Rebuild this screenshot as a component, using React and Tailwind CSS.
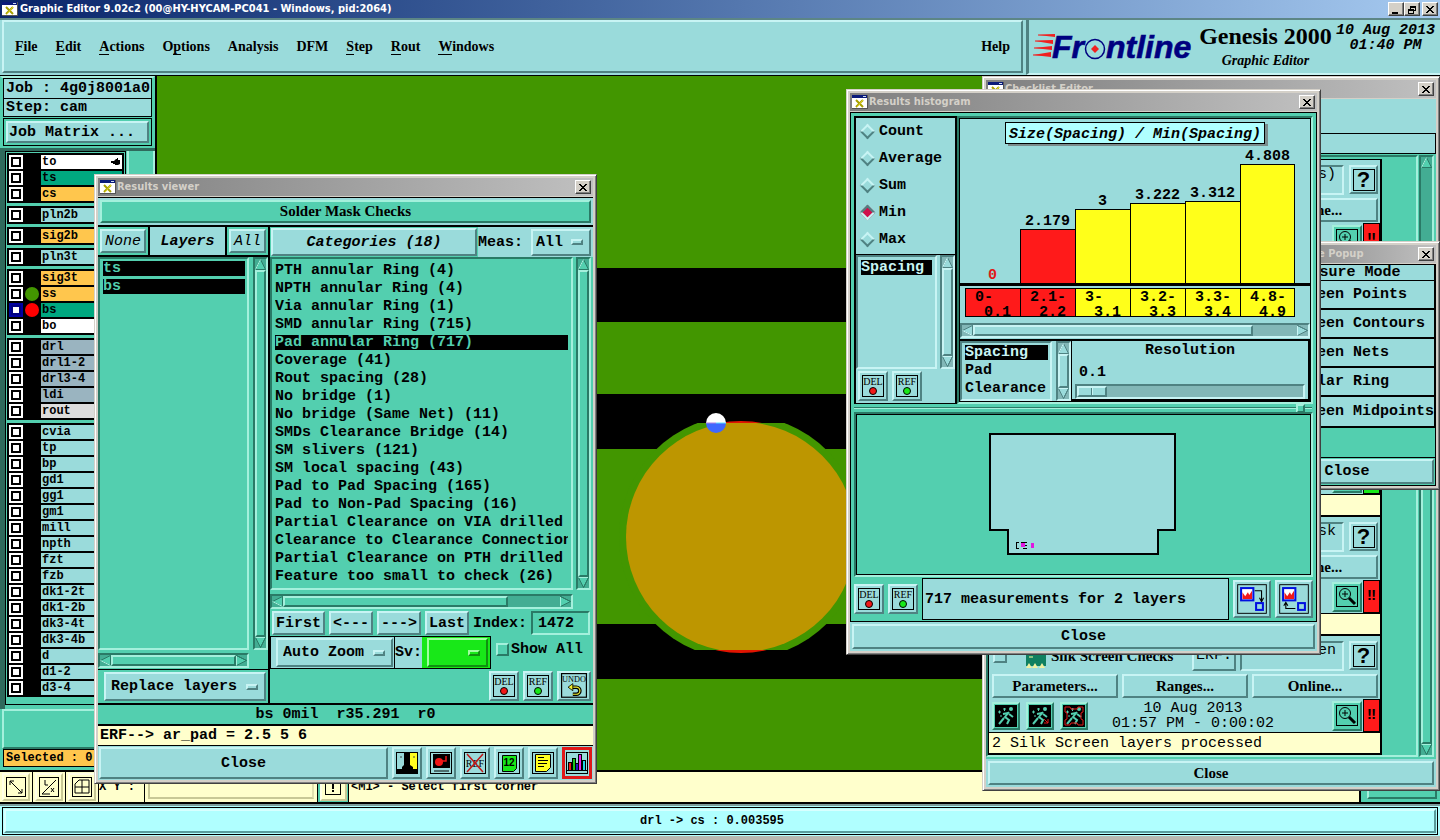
import React from "react";

const MONO = "font-['Liberation_Mono',monospace]";
const SERIF = "font-['Liberation_Serif',serif]";
const SANS = "font-['DejaVu_Sans_Condensed','DejaVu_Sans',sans-serif]";

const RAISED = "border-2 border-t-[#c8f4f4] border-l-[#c8f4f4] border-b-[#4f8282] border-r-[#4f8282]";
const SUNKEN = "border-2 border-t-[#4f8282] border-l-[#4f8282] border-b-[#c8f4f4] border-r-[#c8f4f4]";
const T_RAISED = "border-2 border-t-[#a4f0dc] border-l-[#a4f0dc] border-b-[#2a7a66] border-r-[#2a7a66]";
const T_SUNKEN = "border-2 border-t-[#2a7a66] border-l-[#2a7a66] border-b-[#a4f0dc] border-r-[#a4f0dc]";

const TXT = `${MONO} text-[15px] leading-[15px] font-bold`;
const TXT_SM = `${MONO} text-[12px] leading-[14px] font-bold`;
const LABEL = `${SERIF} text-[15px] leading-[18px] font-bold`;

function WinIcon() {
  return (
    <svg width="16" height="14" viewBox="0 0 16 14" className="shrink-0" aria-hidden="true">
      <rect x="0" y="0" width="16" height="14" fill="#555" />
      <rect x="0" y="0" width="15" height="13" fill="#fff" />
      <rect x="0" y="0" width="15" height="3" fill="#0a1a7a" />
      <rect x="11" y="1" width="3" height="1" fill="#cde" />
      <path d="M4 5l7 7M11 5l-7 7" stroke="#a8a000" strokeWidth="2" />
      <path d="M5 12l6-7" stroke="#e8dc30" />
    </svg>
  );
}

function CaptionButton({ label, children }) {
  return (
    <button
      aria-label={label}
      className="flex h-[14px] w-[16px] shrink-0 items-center justify-center border border-t-white border-l-white border-r-[#404040] border-b-[#404040] bg-[#d4d0c8] shadow-[inset_-1px_-1px_0_#808080]"
    >
      <svg width="10" height="9" viewBox="0 0 10 9" fill="none" stroke="#000" shapeRendering="crispEdges" aria-hidden="true">
        {children}
      </svg>
    </button>
  );
}

const CloseGlyph = () => <path d="M1 1l7 7M2 1l7 7M8 1l-7 7M9 1l-7 7" />;

function Window({ title, place, children }) {
  return (
    <section
      aria-label={title}
      className={`absolute flex flex-col border border-t-[#d4d0c8] border-l-[#d4d0c8] border-r-[#404040] border-b-[#404040] bg-[#d4d0c8] p-[3px] shadow-[inset_1px_1px_0_#fff,inset_-1px_-1px_0_#808080] ${place}`}
    >
      <div className="mb-px flex h-[18px] shrink-0 items-center gap-px bg-linear-to-r from-[#808080] to-[#c0c0c0] px-[2px]">
        <WinIcon />
        <h2 className={`${SANS} min-w-0 flex-1 overflow-hidden text-[11px] leading-[16px] font-bold whitespace-nowrap text-[#d4d0c8]`}>{title}</h2>
        <CaptionButton label={`Close ${title}`}>
          <CloseGlyph />
        </CaptionButton>
      </div>
      {children}
    </section>
  );
}

function Arrow({ dir, teal }) {
  const light = teal ? "#a4f0dc" : "#c8f4f4";
  const dark = teal ? "#2a7a66" : "#4f8282";
  const turn = { up: "", right: "rotate-90", down: "rotate-180", left: "-rotate-90" }[dir];
  return (
    <svg width="11" height="11" viewBox="0 0 11 11" className={`shrink-0 ${turn}`} aria-hidden="true">
      <path d="M5.500 0.500L10.500 10.500H0.500Z" fill={teal ? "#53cfaf" : "#9adbdb"} stroke={dark} />
      <path d="M5.500 0.500L0.500 10.500" stroke={dir === "up" || dir === "left" ? light : dark} />
      <path d="M1 10.500H10.500" stroke={dir === "up" || dir === "left" ? dark : light} />
    </svg>
  );
}

function Scroll({ horizontal, teal, thumb = "flex-1", className = "" }) {
  const tone = teal ? `bg-[#43ad93] ${T_SUNKEN}` : `bg-[#82b7b7] ${SUNKEN}`;
  const knob = teal ? `bg-[#53cfaf] ${T_RAISED}` : `bg-[#9adbdb] ${RAISED}`;
  return (
    <div className={`flex shrink-0 ${horizontal ? "h-[15px] flex-row" : "w-[15px] flex-col"} ${tone} ${className}`}>
      <Arrow dir={horizontal ? "left" : "up"} teal={teal} />
      <div className="flex min-h-0 min-w-0 flex-1">
        <div className={`${knob} ${thumb}`} />
      </div>
      <Arrow dir={horizontal ? "right" : "down"} teal={teal} />
    </div>
  );
}

function Btn({ children, className = "", tone = "bg-[#9adbdb]", font = TXT }) {
  return <button className={`${RAISED} ${tone} ${font} whitespace-nowrap ${className}`}>{children}</button>;
}

function IconBtn({ label, children, className = "size-[30px]", bevel = RAISED, tone = "bg-[#9adbdb]", size = 22 }) {
  return (
    <button aria-label={label} className={`flex shrink-0 items-center justify-center ${bevel} ${tone} ${className}`}>
      <svg width={size} height={size} viewBox="0 0 22 22" fill="none" aria-hidden="true">
        {children}
      </svg>
    </button>
  );
}

function TagIcon({ label, dot }) {
  return (
    <IconBtn label={label}>
      <rect x="0.500" y="0.500" width="21" height="21" stroke="#000" />
      <text x="11" y="10" textAnchor="middle" fontSize="10" fontFamily="Liberation Serif" fill="#000">{label}</text>
      <circle cx="11" cy="16" r="3.500" fill={dot} stroke="#000" />
    </IconBtn>
  );
}

function Drop({ label, options, className = "", tone = "bg-[#9adbdb]", bevel = RAISED }) {
  return (
    <span className={`flex items-center ${bevel} ${tone} ${className}`}>
      <select aria-label={label} className={`${TXT} h-[18px] min-w-0 flex-1 appearance-none bg-transparent outline-none`}>
        {options.map((o) => (
          <option key={o}>{o}</option>
        ))}
      </select>
      <span className={`mr-[6px] h-[6px] w-[12px] shrink-0 ${bevel}`} />
    </span>
  );
}

function Picks({ items, picked, ink, className = "" }) {
  return (
    <ul className={`flex flex-col gap-[3px] ${className}`}>
      {items.map((t) => (
        <li key={t} className="flex">
          <button className={`${TXT} w-full overflow-hidden text-left whitespace-nowrap ${picked.includes(t) ? `bg-black ${ink}` : ""}`}>{t}</button>
        </li>
      ))}
    </ul>
  );
}

/* ---------- main window ---------- */

const MENUS = [
  ["", "F", "ile"],
  ["", "E", "dit"],
  ["", "A", "ctions"],
  ["O", "p", "tions"],
  ["Analysis", "", ""],
  ["DFM", "", ""],
  ["", "S", "tep"],
  ["", "R", "out"],
  ["", "W", "indows"],
];

function Logo() {
  return (
    <svg width="164" height="42" viewBox="0 0 164 42" role="img" aria-label="Frontline" className="shrink-0">
      <g fill="#f02020">
        <path d="M6 7L23 6V9Z" />
        <path d="M3 13L21 12V16Z" />
        <path d="M2 20L20 18V22Z" />
        <path d="M1 27L19 24V29Z" />
      </g>
      <path d="M6 7H23M3 13H21M2 20H20M1 27H19" stroke="#f02020" />
      <g fill="#000080" stroke="#000080" strokeWidth="0.600" fontFamily="Liberation Sans" fontSize="32" fontWeight="bold" fontStyle="italic">
        <text x="20" y="30">Fr</text>
        <text x="74" y="30">ntline</text>
      </g>
      <circle cx="63" cy="21" r="9.500" fill="#9adbdb" stroke="#000080" strokeWidth="1.500" />
      <path d="M63 17l4 4-4 4-4-4z" fill="#f02020" />
    </svg>
  );
}

function Header() {
  return (
    <header className="flex h-[58px] shrink-0 border-t-2 border-b border-t-[#5c8686] border-b-black bg-[#9adbdb]">
      <nav className={`mr-[3px] mb-[2px] ml-[2px] flex min-w-0 flex-1 items-center border-2 border-t-[#c8f4f4] border-l-[#c8f4f4] border-r-[#4f8282] border-b-[#4f8282] pl-[11px] ${SERIF} text-[14px] leading-[18px] font-bold`}>
        <div className="flex flex-1 gap-[18px]">
          {MENUS.map(([a, u, b]) => (
            <button key={a + u + b}>
              {a}
              {u && <span className="border-b border-black">{u}</span>}
              {b}
            </button>
          ))}
        </div>
        <button className="mr-[11px]">Help</button>
      </nav>
      <div className="flex w-[414px] shrink-0 items-start border-l-[3px] border-[#4f8282] border-b-2 border-b-[#c8f4f4] pt-[3px] pl-[3px]">
        <div className="pt-[5px]">
          <Logo />
        </div>
        <div className="flex flex-1 flex-col items-center">
          <h1 className={`${SERIF} text-[24px] leading-[26px] font-bold whitespace-nowrap`}>Genesis 2000</h1>
          <p className={`${SERIF} text-[14px] leading-[24px] font-bold italic`}>Graphic Editor</p>
        </div>
        <p className={`${TXT} pr-[5px] pl-px text-center italic`}>
          10 Aug 2013
          <br />
          01:40 PM
        </p>
      </div>
    </header>
  );
}

const CYAN = "bg-[#9adbdb]";
const ORANGE = "bg-[#ffc64d]";
const JADE = "bg-[#00a880]";
const SLATE = "bg-[#9ab4c0]";
const LAYER_GROUPS = [
  [["to", "bg-white"], ["ts", JADE], ["cs", ORANGE]],
  [["pln2b", CYAN]],
  [["sig2b", ORANGE]],
  [["pln3t", CYAN]],
  [["sig3t", ORANGE], ["ss", ORANGE, "bg-[#429600]"], ["bs", JADE, "bg-[#ff0000]", true], ["bo", "bg-white"]],
  [["drl", SLATE], ["drl1-2", SLATE], ["drl3-4", SLATE], ["ldi", SLATE], ["rout", "bg-[#dcdcdc]"]],
  ["cvia", "tp", "bp", "gd1", "gg1", "gm1", "mill", "npth", "fzt", "fzb", "dk1-2t", "dk1-2b", "dk3-4t", "dk3-4b", "d", "d1-2", "d3-4"].map((n) => [n, CYAN]),
];

function Sidebar() {
  return (
    <aside className="flex w-[157px] shrink-0 flex-col border-r-2 border-black bg-[#53cfaf]">
      <div className="flex flex-col border-2 border-[#53cfaf] border-t-[#a4f0dc] px-px">
        <p className={`${TXT} border border-b-0 border-black bg-[#9adbdb] py-[2px] pl-[2px] whitespace-nowrap`}>Job : 4g0j8001a0</p>
        <p className={`${TXT} border border-black bg-[#9adbdb] py-px pl-[2px]`}>Step: cam</p>
        <div className="mt-px flex border border-black p-[2px]">
          <Btn className="h-[22px] flex-1 px-px text-left">Job Matrix ...</Btn>
        </div>
      </div>
      <div className="flex flex-1 border-t-[3px] border-l-[5px] border-[#2f6a5c] bg-[#53cfaf]">
        <div className="flex w-[121px] shrink-0 flex-col gap-[3px] self-start border border-black px-px pt-px pb-[7px]">
          {LAYER_GROUPS.map((group, g) => (
            <div key={g} className="flex flex-col gap-[2px] bg-black p-[2px]">
              {group.map(([name, tone, dot, work]) => (
                <label key={name} className="flex h-[14px] items-center">
                  <input
                    type="checkbox"
                    className={`size-[14px] shrink-0 appearance-none border-2 bg-white ${work ? "border-[#0000a0] shadow-[inset_0_0_0_2px_#000080]" : "border-white shadow-[inset_0_0_0_2px_#000]"}`}
                  />
                  <span className="flex w-[18px] shrink-0 justify-center">{dot && <span className={`size-[14px] rounded-full ${dot}`} />}</span>
                  <span className={`${TXT_SM} flex flex-1 justify-between pl-px whitespace-nowrap ${tone}`}>
                    {name}
                    {name === "to" && (
                      <svg width="9" height="10" viewBox="0 0 9 10" className="mt-[2px] mr-[2px]" aria-hidden="true">
                        <path d="M0 4h3l2-2h1V1h1v2h2v4L7 8H4V7H2V6H0z" fill="#000" />
                      </svg>
                    )}
                  </span>
                </label>
              ))}
            </div>
          ))}
        </div>
        <div className="ml-px flex-1 border-l-2 border-r-2 border-[#a4f0dc]" />
      </div>
      <div className={`mx-[2px] h-[40px] shrink-0 ${T_RAISED} border-r-0`} />
      <p className={`${TXT_SM} mx-[3px] mb-[3px] border border-black bg-[#ffc64d] py-px pl-[2px]`}>Selected : 0</p>
    </aside>
  );
}

function Board() {
  return (
    <main className="relative min-w-0 flex-1 overflow-hidden bg-[#429600]">
      <svg className="absolute inset-0 h-full w-full" viewBox="0 0 1283 694" preserveAspectRatio="xMinYMin slice" role="img" aria-label="Board artwork">
        <defs>
          <clipPath id="maskCut">
            <rect x="400" y="347" width="400" height="227" />
          </clipPath>
        </defs>
        <rect y="192" width="1290" height="54" fill="#000" />
        <rect y="318" width="1290" height="55" fill="#000" />
        <rect y="548" width="1290" height="55" fill="#000" />
        <circle cx="584" cy="461" r="116" fill="#e01400" />
        <circle cx="584" cy="461" r="122" fill="#429600" clipPath="url(#maskCut)" />
        <circle cx="584" cy="461" r="115" fill="#bd9600" clipPath="url(#maskCut)" />
        <path d="M549 347a10 10 0 0 1 20 0z" fill="#fff" />
        <path d="M549 347a10 10 0 0 0 20 0z" fill="#3f68ff" />
        <path d="M559 347h10" stroke="#60e0ff" />
        <path d="M549 347h10" stroke="#b080e0" />
      </svg>
    </main>
  );
}

function ToolBtn({ label, children }) {
  return (
    <div className="flex items-center justify-center border-r border-black bg-[#ffffcc] px-[2px]">
      <IconBtn label={label} className="size-[28px]" bevel="border-2 border-t-[#ffffe8] border-l-[#ffffe8] border-b-[#c8c896] border-r-[#c8c896]" tone="bg-[#ffffcc]">
        <rect x="1.500" y="1.500" width="19" height="19" stroke="#000" />
        {children}
      </IconBtn>
    </div>
  );
}

function Footer() {
  return (
    <footer className="shrink-0">
      <div className="flex h-[34px] border-t-2 border-b-2 border-black bg-[#53cfaf]">
        <ToolBtn label="Snap to point">
          <path d="M5 5l12 12M5 9V5h4M17 13v4h-4" stroke="#000" />
        </ToolBtn>
        <ToolBtn label="Angle">
          <path d="M4 18L18 4M7 4v5h3M4 18h8M13 12l3 4M16 12l-3 4" stroke="#000" />
        </ToolBtn>
        <ToolBtn label="Grid">
          <path d="M4 8l4-4h10v13H4zM4 11h14M11 4v13" stroke="#000" />
        </ToolBtn>
        <label htmlFor="xy" className={`${TXT_SM} flex w-[45px] items-center bg-[#ffffcc]`}>X Y :</label>
        <div className="flex w-[174px] items-stretch border-x border-black bg-[#ffffcc] p-[3px]">
          <input id="xy" className={`${TXT_SM} w-full border-2 border-[#c8c896] border-r-[#e0e0b0] bg-[#ffffcc] px-1 outline-none`} defaultValue="" />
        </div>
        <div className="flex w-[31px] items-center justify-center border-r border-black">
          <IconBtn label="Alert" className="size-[27px]" bevel="border-2 border-t-[#ffffe8] border-l-[#ffffe8] border-b-[#c8c896] border-r-[#c8c896]" tone="bg-[#ffffcc]">
            <rect x="3.500" y="2.500" width="15" height="16" stroke="#000" />
            <path d="M11 5v8M11 14v2" stroke="#000" strokeWidth="2" />
          </IconBtn>
        </div>
        <p className={`${TXT_SM} flex flex-1 items-center border-r-2 border-black bg-[#ffffcc] pl-[2px]`}>&lt;M1&gt; - Select first corner</p>
        <div className="flex w-[79px] p-[3px] pl-[6px]">
          <button className={`${T_RAISED} ${TXT} flex-1 bg-[#53cfaf] pr-2`}>Inch</button>
        </div>
      </div>
      <div className="border-t-2 border-b-4 border-t-[#7a9c9c] border-b-[#b8b8b0] bg-[#b0ffff] px-[2px] py-px">
        <p className={`${TXT_SM} border border-black bg-[#b0ffff] p-px text-center`}>
          <span className="block border-2 border-t-[#d8ffff] border-l-[#d8ffff] border-r-[#5a9c9c] border-b-[#5a9c9c] py-[3px] pr-[16px]">drl -&gt; cs : 0.003595</span>
        </p>
      </div>
    </footer>
  );
}

/* ---------- results viewer ---------- */

const CATEGORIES = [
  "PTH annular Ring (4)",
  "NPTH annular Ring (4)",
  "Via annular Ring (1)",
  "SMD annular Ring (715)",
  "Pad annular Ring (717)",
  "Coverage (41)",
  "Rout spacing (28)",
  "No bridge (1)",
  "No bridge (Same Net) (11)",
  "SMDs Clearance Bridge (14)",
  "SM slivers (121)",
  "SM local spacing (43)",
  "Pad to Pad Spacing (165)",
  "Pad to Non-Pad Spacing (16)",
  "Partial Clearance on VIA drilled",
  "Clearance to Clearance Connection",
  "Partial Clearance on PTH drilled",
  "Feature too small to check (26)",
];

function ResultsViewer() {
  return (
    <Window title="Results viewer" place="top-[174px] left-[94px] w-[503px]">
      <div className="flex flex-col bg-[#53cfaf] text-black">
        <div className="border-t border-b-2 border-black bg-[#9adbdb] p-[2px]">
          <h3 className={`${T_RAISED} ${LABEL} h-[23px] bg-[#53cfaf] text-center`}>Solder Mask Checks</h3>
        </div>
        <div className="flex border-b-2 border-black">
          <div className="flex w-[172px] shrink-0 flex-col border-r-2 border-black">
            <div className="flex h-[30px] border-b-2 border-black">
              <div className="flex p-[2px]">
                <Btn font={`${MONO} text-[15px] leading-[15px] italic`} className="px-[3px]">None</Btn>
              </div>
              <h3 className={`${TXT} flex flex-1 items-center justify-center border-x-2 border-black bg-[#9adbdb] italic`}>Layers</h3>
              <div className="flex p-[2px]">
                <Btn font={`${MONO} text-[15px] leading-[15px] italic`} className="px-[3px]">All</Btn>
              </div>
            </div>
            <div className="flex flex-1 gap-[4px]">
              <div className={`flex-1 ${T_SUNKEN} p-[2px] pl-[3px]`}>
                <Picks items={["ts", "bs"]} picked={["ts", "bs"]} ink="text-[#53cfaf]" />
              </div>
              <Scroll teal />
            </div>
            <div className="pt-[3px] pr-[19px]">
              <Scroll horizontal teal />
            </div>
            <div className="mt-px flex border-t border-black py-[2px] pr-[2px] pl-[6px]">
              <Drop label="Layer list mode" options={["Replace layers"]} className="h-[29px] flex-1 pl-[5px]" />
            </div>
          </div>
          <div className="flex min-w-0 flex-1 flex-col">
            <div className="flex bg-[#9adbdb]">
              <div className="flex bg-[#53cfaf] p-px">
                <Btn className="h-[28px] w-[206px] italic">Categories (18)</Btn>
              </div>
              <label className={`${TXT} flex flex-1 items-center justify-between`}>
                Meas:
                <Drop label="Measurements" options={["All"]} className="mr-[2px] h-[27px] w-[60px] pl-[3px]" />
              </label>
            </div>
            <div className="flex gap-[3px] pr-[2px]">
              <div className={`min-w-0 flex-1 ${T_SUNKEN} pt-[4px] pr-[3px] pb-[4px] pl-[3px]`}>
                <Picks items={CATEGORIES} picked={["Pad annular Ring (717)"]} ink="text-[#53cfaf]" />
              </div>
              <Scroll teal />
            </div>
            <div className="pt-[4px] pr-[20px]">
              <Scroll horizontal teal thumb="w-[225px]" />
            </div>
            <div className="flex items-center gap-[4px] px-[2px] pt-[2px] pb-px">
              <Btn className="h-[24px] w-[53px]">First</Btn>
              <Btn className="h-[24px] w-[44px]">&lt;---</Btn>
              <Btn className="h-[24px] w-[44px]">---&gt;</Btn>
              <Btn className="h-[24px] w-[44px]">Last</Btn>
              <label htmlFor="idx" className={TXT}>Index:</label>
              <input id="idx" defaultValue="1472" className={`${TXT} ${T_SUNKEN} h-[24px] w-[59px] bg-[#53cfaf] px-[5px] outline-none`} />
            </div>
            <div className="flex items-center">
              <div className="flex border border-black">
                <div className="flex border-r border-black bg-[#9adbdb] p-px pl-[5px]">
                  <Drop label="Zoom mode" options={["Auto Zoom"]} className="h-[29px] w-[117px] pl-[5px]" />
                </div>
                <span className={`${TXT} flex items-center bg-[#9adbdb]`}>Sv:</span>
                <div className="flex bg-[#18e818] py-px pr-[2px] pl-[5px]">
                  <Drop label="Severity colour" options={[" "]} tone="bg-[#18e818]" bevel="border-2 border-t-[#a0ffa0] border-l-[#a0ffa0] border-b-[#109010] border-r-[#109010]" className="h-[29px] w-[61px]" />
                </div>
              </div>
              <label className={`${TXT} ml-[5px] flex items-center gap-[2px] pb-[6px]`}>
                <input type="checkbox" className={`size-[13px] appearance-none bg-[#53cfaf] ${T_RAISED} border`} />
                Show All
              </label>
            </div>
            <div className="flex justify-end gap-[4px] py-[2px] pr-[2px]">
              <TagIcon label="DEL" dot="#f01818" />
              <TagIcon label="REF" dot="#18e818" />
              <IconBtn label="Undo" className="h-[30px] w-[34px]" size={26}>
                <rect x="0.500" y="0.500" width="21" height="20" stroke="#000" />
                <text x="11" y="8" textAnchor="middle" fontSize="7" fontFamily="Liberation Serif" fill="#000">UNDO</text>
                <path d="M9 12h4a3 3 0 0 1 0 6h-3" stroke="#000" strokeWidth="3" />
                <path d="M9 12h4a3 3 0 0 1 0 6h-3" stroke="#f0f030" />
                <path d="M6 12l4-3v6z" fill="#f0f030" stroke="#000" strokeWidth="0.700" />
              </IconBtn>
            </div>
          </div>
        </div>
        <p className={`${TXT} border-b-2 border-black py-[2px] text-center whitespace-pre`}>{"bs 0mil  r35.291  r0"}</p>
        <p className={`${TXT} border-b border-black bg-[#ffffcc] py-[2px] pl-[2px]`}>ERF--&gt; ar_pad = 2.5 5 6</p>
        <div className="flex gap-[4px] bg-[#9adbdb] p-px">
          <Btn className="h-[32px] flex-1">Close</Btn>
          <IconBtn label="Contrast" className="h-[32px] w-[30px]">
            <rect width="22" height="22" fill="#000" />
            <rect x="1" y="1" width="9" height="16" fill="#9adbdb" />
            <rect x="12" y="1" width="9" height="16" fill="#ffff20" />
            <path d="M8 1h6v12l3 2v2H6v-2l2-2z" fill="#000" />
            <path d="M4 5h2M17 5h2" stroke="#444" />
          </IconBtn>
          <IconBtn label="Snapshot" className="h-[32px] w-[30px]">
            <rect x="0.500" y="0.500" width="21" height="21" stroke="#000" />
            <rect x="3" y="2" width="17" height="14" fill="#000" />
            <circle cx="9" cy="10" r="4" fill="#f01818" />
            <path d="M12 9h4V4" stroke="#f01818" strokeWidth="1.500" />
            <path d="M4 19h15" stroke="#000" />
          </IconBtn>
          <IconBtn label="Clear reference" className="h-[32px] w-[30px]">
            <rect x="0.500" y="0.500" width="21" height="21" stroke="#000" />
            <text x="11" y="15" textAnchor="middle" fontSize="10" fontFamily="Liberation Serif" fill="#000">REF</text>
            <path d="M3 2l16 18M19 2L3 20" stroke="#c01818" strokeWidth="1.500" />
          </IconBtn>
          <IconBtn label="Numbering" className="h-[32px] w-[30px]">
            <rect x="0.500" y="0.500" width="21" height="21" stroke="#000" />
            <path d="M4.500 3.500h14v13l-3 3h-11z" fill="#18e818" stroke="#000" />
            <text x="11" y="14" textAnchor="middle" fontSize="10" fontWeight="bold" fontFamily="Liberation Sans" fill="#000">12</text>
          </IconBtn>
          <IconBtn label="Report" className="h-[32px] w-[30px]">
            <rect x="0.500" y="0.500" width="21" height="21" stroke="#000" />
            <path d="M3.500 2.500h15v13l-4 4h-11z" fill="#ffff20" stroke="#000" />
            <path d="M6 5.500h6M6 8.500h10M6 11.500h9M6 14.500h6" stroke="#000" />
          </IconBtn>
          <IconBtn label="Histogram" className="h-[32px] w-[30px]" bevel="border-[3px] border-[#e01818]">
            <rect x="0.500" y="0.500" width="21" height="21" stroke="#000" />
            <path d="M1 18.500h20" stroke="#000" />
            <g stroke="#000">
              <rect x="2.500" y="10.500" width="3" height="8" fill="#f01818" />
              <rect x="6.500" y="6.500" width="3" height="12" fill="#18c818" />
              <rect x="9.500" y="11.500" width="3" height="7" fill="#2020c0" />
              <rect x="12.500" y="2.500" width="3" height="16" fill="#f020f0" />
              <rect x="16.500" y="8.500" width="3" height="10" fill="#20d8e8" />
            </g>
          </IconBtn>
        </div>
      </div>
    </Window>
  );
}

/* ---------- results histogram ---------- */

const BINS = [
  { value: 0, from: "0-", to: "0.1", tone: "bg-[#ff1a1a]" },
  { value: 2.179, from: "2.1-", to: "2.2", tone: "bg-[#ff1a1a]" },
  { value: 3, from: "3-", to: "3.1", tone: "bg-[#ffff1a]" },
  { value: 3.222, from: "3.2-", to: "3.3", tone: "bg-[#ffff1a]" },
  { value: 3.312, from: "3.3-", to: "3.4", tone: "bg-[#ffff1a]" },
  { value: 4.808, from: "4.8-", to: "4.9", tone: "bg-[#ffff1a]" },
];

function Chart() {
  return (
    <div className="flex flex-col pt-[3px]">
      <h3 className={`${TXT} self-center border border-black bg-[#b0ffff] px-[3px] pt-[4px] pb-px italic shadow-[3px_2px_0_#7a8c8c]`}>
        Size(Spacing) / Min(Spacing)
      </h3>
      <div className="flex h-[142px] items-end border-b-[3px] border-black pl-[5px]">
        {BINS.map((b, i) => (
          <div key={b.from} className={`flex w-[55px] flex-col text-center ${TXT}`}>
            <span className={b.value ? "" : "text-[#e01818]"}>{b.value}</span>
            {b.value > 0 && (
              <div className={`border-t border-l border-black ${b.tone} ${i === BINS.length - 1 ? "border-r" : ""}`} style={{ height: Math.round(b.value * 24.7) }} />
            )}
          </div>
        ))}
      </div>
      <div className="mt-[2px] mb-[6px] flex pl-[5px]">
        {BINS.map((b, i) => (
          <div key={b.to} className={`${TXT} h-[29px] w-[55px] border-y border-l border-black pt-px pl-[9px] ${b.tone} ${i === BINS.length - 1 ? "border-r" : ""}`}>
            <span className="block">{b.from}</span>
            <span className="block pl-[9px]">{b.to}</span>
          </div>
        ))}
      </div>
      <Scroll horizontal thumb="w-[280px]" />
    </div>
  );
}

function CopyIcon({ label, back }) {
  return (
    <IconBtn label={label} className="h-[38px] w-[38px]" size={30}>
      <rect x="0.500" y="0.500" width="21" height="21" stroke="#000" strokeWidth="0.700" />
      <rect x="3" y="3" width="9" height="9" fill="#fff" stroke="#0010e0" strokeWidth="1.500" />
      <path d="M4 11V6l2 3 2-3 1 2 2-3v6z" fill="#f01818" />
      {back ? (
        <path d="M12 18H5V14M3.500 16L5 13.500 6.500 16" stroke="#000" strokeWidth="0.800" />
      ) : (
        <path d="M13 5h5v7M16.500 10l1.500 3 1.500-3" stroke="#000" strokeWidth="0.800" />
      )}
      <rect x="14" y="14" width="5" height="5" stroke="#0010e0" strokeWidth="1.500" />
    </IconBtn>
  );
}

function Histogram() {
  return (
    <Window title="Results histogram" place="top-[89px] left-[846px] w-[475px]">
      <div className="flex flex-col border border-black bg-[#53cfaf] px-[3px] pt-[3px] text-black">
        <div className="flex h-[288px]">
          <div className="flex w-[103px] shrink-0 flex-col border-2 border-r-2 border-b border-black bg-[#9adbdb]">
            <fieldset className="flex flex-col gap-[12px] border-b border-black pt-[6px] pb-[7px]">
              {["Count", "Average", "Sum", "Min", "Max"].map((t) => (
                <label key={t} className={`${TXT} flex items-center gap-[6px] pl-[6px]`}>
                  <input
                    type="radio"
                    name="stat"
                    defaultChecked={t === "Min"}
                    className={`size-[11px] rotate-45 appearance-none ${t === "Min" ? `${SUNKEN} bg-[#d0104c]` : `${RAISED} bg-[#9adbdb]`}`}
                  />
                  {t}
                </label>
              ))}
            </fieldset>
            <div className="flex flex-1 gap-[3px]">
              <div className={`flex-1 ${SUNKEN} p-[3px]`}>
                <Picks items={["Spacing"]} picked={["Spacing"]} ink="text-[#c8f4f4]" />
              </div>
              <Scroll />
            </div>
            <div className="flex gap-[4px] p-[2px]">
              <TagIcon label="DEL" dot="#f01818" />
              <TagIcon label="REF" dot="#18e818" />
            </div>
          </div>
          <div className="flex min-w-0 flex-1 flex-col border-2 border-t-[#2a7a66] border-l-[#2a7a66] border-b-[#a4f0dc] border-r-[#a4f0dc]">
            <div className="flex flex-1 flex-col border border-black bg-[#9adbdb]">
              <Chart />
              <div className="mt-px flex flex-1 border-t-2 border-black">
                <div className="flex gap-[4px] border-r border-black">
                  <div className={`w-[92px] ${SUNKEN} py-[2px] pr-[2px] pl-[3px]`}>
                    <Picks items={["Spacing", "Pad", "Clearance"]} picked={["Spacing"]} ink="text-[#c8f4f4]" />
                  </div>
                  <Scroll />
                </div>
                <div className={`${TXT} flex flex-1 flex-col border-r-2 border-b-2 border-black px-[3px] pt-[2px]`}>
                  <label htmlFor="res" className="text-center">Resolution</label>
                  <output htmlFor="res" className="mt-[7px] pl-[4px]">0.1</output>
                  <input
                    id="res"
                    type="range"
                    min="0"
                    max="100"
                    defaultValue="0"
                    className={`mt-[4px] h-[15px] w-full appearance-none bg-[#82b7b7] ${SUNKEN} [&::-webkit-slider-thumb]:h-[11px] [&::-webkit-slider-thumb]:w-[30px] [&::-webkit-slider-thumb]:appearance-none [&::-webkit-slider-thumb]:border-2 [&::-webkit-slider-thumb]:border-t-[#c8f4f4] [&::-webkit-slider-thumb]:border-r-[#4f8282] [&::-webkit-slider-thumb]:border-b-[#4f8282] [&::-webkit-slider-thumb]:border-l-[#c8f4f4] [&::-webkit-slider-thumb]:bg-[linear-gradient(90deg,#9adbdb_12px,#4f8282_12px,#4f8282_13px,#c8f4f4_13px,#c8f4f4_14px,#9adbdb_14px)]`}
                  />
                </div>
              </div>
            </div>
          </div>
        </div>
        <div className="flex h-[8px] items-center pr-px">
          <div className="h-[2px] flex-1 border-t border-b border-t-[#2a7a66] border-b-[#a4f0dc]" />
          <div className={`size-[9px] shrink-0 bg-[#53cfaf] ${T_RAISED}`} />
          <div className="h-[2px] w-[7px] border-t border-b border-t-[#2a7a66] border-b-[#a4f0dc]" />
        </div>
        <div className={`flex h-[165px] ${T_SUNKEN}`}>
          <svg viewBox="0 0 453 159" className="h-full w-full border border-black" role="img" aria-label="Board profile">
            <path d="M133 19H318V115H301V139H151V115H133Z" fill="#9adbdb" stroke="#000" strokeWidth="2" />
            <path d="M159 127.500h3M159.500 127v6M159 133.500h3M164 127.500h6M164 130.500h6M166 133.500h4" stroke="#000" fill="none" />
            <path d="M164 128h4v4h-4zM174 128h3v5h-3z" fill="#e018e0" />
          </svg>
        </div>
        <div className="flex items-center gap-[4px] pt-px pb-px">
          <TagIcon label="DEL" dot="#f01818" />
          <TagIcon label="REF" dot="#18e818" />
          <p className={`${TXT} flex h-[42px] flex-1 items-center border border-black bg-[#9adbdb] pl-[2px]`}>717 measurements for 2 layers</p>
          <CopyIcon label="Copy result down" />
          <CopyIcon label="Copy result up" back />
        </div>
      </div>
      <div className="flex bg-[#9adbdb] p-[2px]">
        <Btn className="h-[25px] flex-1">Close</Btn>
      </div>
    </Window>
  );
}

/* ---------- checklist editor ---------- */

const CHECKS = [
  { name: "Signal Layer Checks", field: "layers)", msg: "2 Signal layers processed", flag: "bg-[#ff1a1a]" },
  { name: "Drill Checks", field: "drills", msg: "Drill layers processed", flag: "bg-[#ff1a1a]" },
  { name: "Plane Checks", field: "planes", msg: "2 Plane layers", flag: "bg-[#18e818]" },
  { name: "Solder Mask Checks", field: "sold. mask", msg: "2 Mask layers", flag: "bg-[#ff1a1a]" },
  { name: "Silk Screen Checks", field: "silkscreen", msg: "2 Silk Screen layers processed", flag: "bg-[#ff1a1a]" },
];

function Runner({ extra, label }) {
  return (
    <IconBtn label={label} className="size-[28px]" bevel={T_RAISED} tone="bg-[#53cfaf]">
      <rect x="0" y="0" width="22" height="22" fill="#000" />
      <circle cx="16" cy="4" r="2" fill="#53cfaf" />
      <path d="M14 7l-4 5 4 3-2 4M9 13l-5 6M14 9l4 3M13 8l-5 1" stroke="#53cfaf" strokeWidth="2" />
      <path d="M3 7h3M4.500 5.500v3M8 4h3M9.500 3v3M5 11h2" stroke="#53cfaf" />
      {extra === "step" && <path d="M15 14l4 4M19 14v4h-4" stroke="#e01818" />}
      {extra === "frame" && <path d="M2 2h5l1 2h6l1-2h5v5l-2 1v6l2 1v5h-5l-1-2H8l-1 2H2v-5l2-1V8L2 7z" stroke="#e01818" />}
    </IconBtn>
  );
}

function CheckRow({ c, n }) {
  return (
    <li className="flex h-[119px] flex-col border-r-2 border-l border-black bg-[#9adbdb]">
      <div className="flex h-[36px] items-center pt-[3px] pr-[2px] pl-[4px]">
        <input id={`chk${n}`} type="checkbox" className={`size-[14px] appearance-none ${RAISED}`} />
        <svg width="20" height="24" viewBox="0 0 20 24" className="ml-[19px] shrink-0" aria-hidden="true">
          <rect width="20" height="22" fill="#108060" />
          <path d="M3 4h5v5h6M3 13h4M12 3v3" stroke="#ffffa0" fill="none" />
          <path d="M0 24l3-5 3 5zM6 24l3-5 3 5zM13 24l3-5 3 5z" fill="#f0f0a0" />
        </svg>
        <label htmlFor={`chk${n}`} className={`${LABEL} ml-[5px] w-[141px] whitespace-nowrap`}>{c.name}</label>
        <Btn font={`${MONO} text-[15px] leading-[15px]`} className="h-[30px] w-[44px] overflow-hidden">ERF:</Btn>
        <div className={`${MONO} ${SUNKEN} ml-[4px] h-[30px] w-[104px] overflow-hidden pr-[6px] text-right text-[15px] leading-[15px]`}>{c.field}</div>
        <button aria-label={`Help on ${c.name}`} className={`${RAISED} ml-[5px] flex size-[29px] shrink-0 items-center justify-center`}>
          <span className="flex size-[22px] items-center justify-center border border-black font-['Liberation_Sans',sans-serif] text-[22px] leading-[20px] font-bold">?</span>
        </button>
      </div>
      <div className="flex gap-[4px] pt-[2px] pr-[2px] pb-px pl-[3px]">
        {["Parameters...", "Ranges...", "Online..."].map((t) => (
          <Btn key={t} font={LABEL} className="h-[24px] flex-1">{t}</Btn>
        ))}
      </div>
      <div className="flex flex-1 items-center gap-[6px] pl-[3px]">
        <Runner label="Run" />
        <Runner label="Run step" extra="step" />
        <Runner label="Run region" extra="frame" />
        <p className={`${MONO} flex-1 pr-[34px] text-center text-[15px] leading-[15px] whitespace-nowrap`}>
          10 Aug 2013
          <br />
          01:57 PM - 0:00:02
        </p>
        <div className="flex gap-px self-stretch">
          <IconBtn label="View results" className="my-px mt-[2px] size-[30px]" bevel={T_RAISED} tone="bg-[#53cfaf]">
            <rect x="0.500" y="0.500" width="21" height="20" stroke="#000" />
            <circle cx="9" cy="8" r="5.500" stroke="#000" />
            <path d="M6 8h6M9 5v6" stroke="#000" />
            <path d="M13 12l6 6" stroke="#000" strokeWidth="3" />
          </IconBtn>
          <span className={`${TXT} flex w-[17px] items-center justify-center border border-black ${c.flag}`}>‼</span>
        </div>
      </div>
      <p className={`${MONO} border-y border-b-2 border-black bg-[#ffffcc] pt-[2px] pb-px pl-[3px] text-[15px] leading-[17px]`}>{c.msg}</p>
    </li>
  );
}

function Checklist() {
  return (
    <Window title="Checklist Editor" place="top-[76px] right-0 w-[458px]">
      <div className="h-[34px] bg-[#9adbdb]" />
      <div className="h-[21px] border border-black bg-[#9adbdb]" />
      <div className="flex justify-between bg-[#53cfaf] pt-px pr-[2px] pb-[2px]">
        <div className={`w-[432px] border-2 ${T_SUNKEN}`}>
          <ul className="mt-[2px] w-[394px] border-t border-black">
            {CHECKS.map((c, i) => (
              <CheckRow key={c.name} c={c} n={i} />
            ))}
          </ul>
        </div>
        <Scroll teal thumb="mt-[220px] flex-1" />
      </div>
      <div className="flex bg-[#9adbdb] p-[2px]">
        <Btn font={LABEL} className="h-[24px] flex-1">Close</Btn>
      </div>
    </Window>
  );
}

function MeasurePopup() {
  return (
    <Window title="Measure Popup" place="top-[241px] right-0 w-[186px]">
      <div className="flex flex-col border border-black bg-[#53cfaf] text-black">
        <fieldset className="border-r border-b-2 border-black bg-[#9adbdb]">
          <legend className={`${TXT} float-left w-full border-b border-black text-center`}>Measure Mode</legend>
          {["Between Points", "Between Contours", "Between Nets", "Annular Ring", "Between Midpoints"].map((t, i) => (
            <label key={t} className={`${TXT} flex h-[29px] w-full items-center gap-[6px] border-black pl-[5px] whitespace-nowrap ${i < 4 ? "border-b-2" : ""}`}>
              <input type="radio" name="mode" className={`size-[11px] rotate-45 appearance-none ${RAISED}`} />
              {t}
            </label>
          ))}
        </fieldset>
        <div className="h-[30px] border-b border-black" />
        <div className="flex p-px">
          <Btn className="h-[25px] flex-1">Close</Btn>
        </div>
      </div>
    </Window>
  );
}

export default function App() {
  return (
    <div className="relative flex min-h-screen flex-col overflow-hidden bg-[#53cfaf] text-black">
      <div className="flex h-[18px] shrink-0 items-center gap-[2px] bg-linear-to-r from-[#0a246a] to-[#a6caf0] px-[2px]">
        <WinIcon />
        <span className={`${SANS} flex-1 text-[11px] leading-[16px] font-bold whitespace-nowrap text-white`}>
          Graphic Editor 9.02c2 (00@HY-HYCAM-PC041 - Windows, pid:2064)
        </span>
        <div className="flex">
          <CaptionButton label="Minimize">
            <path d="M1 7h6M1 8h6" />
          </CaptionButton>
          <CaptionButton label="Restore">
            <path d="M3 1.500h6M3 2.500h6M3 1v3M8.500 2v4M7 5.500h2M1 4.500h6M1 5.500h6M1.500 4v5M6.500 4v5M1 8.500h6" />
          </CaptionButton>
        </div>
        <CaptionButton label="Close">
          <CloseGlyph />
        </CaptionButton>
      </div>
      <Header />
      <div className="flex flex-1 items-stretch">
        <Sidebar />
        <Board />
      </div>
      <Footer />
      <Checklist />
      <MeasurePopup />
      <Histogram />
      <ResultsViewer />
    </div>
  );
}
